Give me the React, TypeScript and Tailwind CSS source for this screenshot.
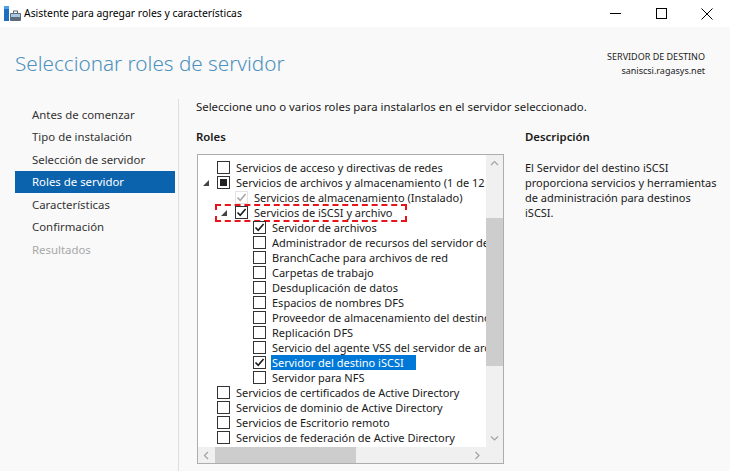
type Row = {
  label: string;
  level: 0 | 1 | 2;
  state: "off" | "on" | "mixed" | "fixed";
  expanded?: boolean;
  selected?: boolean;
  marked?: boolean;
};

const navItems = [
  { label: "Antes de comenzar" },
  { label: "Tipo de instalación" },
  { label: "Selección de servidor" },
  { label: "Roles de servidor", active: true },
  { label: "Características" },
  { label: "Confirmación" },
  { label: "Resultados", disabled: true },
];

const rows: Row[] = [
  { label: "Servicios de acceso y directivas de redes", level: 0, state: "off" },
  { label: "Servicios de archivos y almacenamiento (1 de 12 instalados)", level: 0, state: "mixed", expanded: true },
  { label: "Servicios de almacenamiento (Instalado)", level: 1, state: "fixed" },
  { label: "Servicios de iSCSI y archivo", level: 1, state: "on", expanded: true, marked: true },
  { label: "Servidor de archivos", level: 2, state: "on" },
  { label: "Administrador de recursos del servidor de archivos", level: 2, state: "off" },
  { label: "BranchCache para archivos de red", level: 2, state: "off" },
  { label: "Carpetas de trabajo", level: 2, state: "off" },
  { label: "Desduplicación de datos", level: 2, state: "off" },
  { label: "Espacios de nombres DFS", level: 2, state: "off" },
  { label: "Proveedor de almacenamiento del destino iSCSI (proveedores de hardware VDS y VSS)", level: 2, state: "off" },
  { label: "Replicación DFS", level: 2, state: "off" },
  { label: "Servicio del agente VSS del servidor de archivos", level: 2, state: "off" },
  { label: "Servidor del destino iSCSI", level: 2, state: "on", selected: true },
  { label: "Servidor para NFS", level: 2, state: "off" },
  { label: "Servicios de certificados de Active Directory", level: 0, state: "off" },
  { label: "Servicios de dominio de Active Directory", level: 0, state: "off" },
  { label: "Servicios de Escritorio remoto", level: 0, state: "off" },
  { label: "Servicios de federación de Active Directory", level: 0, state: "off" },
];

const indent = ["pl-[1px]", "pl-[19px]", "pl-[37px]"];

const Check = ({ state }: { state: Row["state"] }) => (
  <span
    className={`w-[13px] h-[13px] shrink-0 border flex items-center justify-center bg-white ${
      state === "fixed" ? "border-[#e3e3e3]" : "border-[#333333]"
    }`}
  >
    {state === "mixed" && <span className="w-[7px] h-[7px] bg-[#222]" />}
    {(state === "on" || state === "fixed") && (
      <svg width="11" height="11" viewBox="0 0 11 11">
        <path
          d="M1.5 5.5 L4.2 8.3 L9.6 2"
          fill="none"
          stroke={state === "fixed" ? "#a6a6a6" : "#1a1a1a"}
          strokeWidth="1.6"
        />
      </svg>
    )}
  </span>
);

const Chevron = ({ dir }: { dir: "up" | "down" | "left" | "right" }) => {
  const d = {
    up: "M1 5 L4.5 1.5 L8 5",
    down: "M1 1.5 L4.5 5 L8 1.5",
    left: "M5 1 L1.5 4.5 L5 8",
    right: "M1.5 1 L5 4.5 L1.5 8",
  }[dir];
  const vertical = dir === "up" || dir === "down";
  return (
    <svg width={vertical ? 9 : 7} height={vertical ? 7 : 9} viewBox={vertical ? "0 0 9 7" : "0 0 7 9"}>
      <path d={d} fill="none" stroke="#a3a3a3" strokeWidth="1.2" />
    </svg>
  );
};

const App = () => {
  return (
    <div className="w-[730px] h-[471px] overflow-hidden bg-[#f9f9f9] flex flex-col text-[11.4px] text-[#1a1a1a] font-['Noto_Sans','Open_Sans',sans-serif]">
      {/* title bar */}
      <div className="h-[27px] bg-white flex items-center shrink-0">
        <svg width="18" height="16" viewBox="0 0 18 16" className="ml-[4px]">
          <rect x="0" y="0" width="5" height="15" fill="#1f6fc1" />
          <rect x="0" y="0" width="5" height="3" fill="#4aa3e8" />
          <rect x="6" y="7" width="11" height="8" rx="1" fill="#5d6b7a" />
          <rect x="7" y="8" width="9" height="3" fill="#a9c7e3" />
          <rect x="9.5" y="5" width="4" height="2.5" fill="none" stroke="#5d6b7a" strokeWidth="1" />
        </svg>
        <span className="ml-[2px] text-[10.4px] text-black leading-none">Asistente para agregar roles y características</span>
        <div className="ml-auto flex items-center h-full">
          <div className="w-[46px] h-full flex items-center justify-center">
            <span className="w-[11px] h-px bg-black" />
          </div>
          <div className="w-[46px] h-full flex items-center justify-center">
            <span className="w-[11px] h-[11px] border border-black" />
          </div>
          <div className="w-[46px] h-full flex items-center justify-center">
            <svg width="12" height="12" viewBox="0 0 12 12">
              <path d="M0.5 0.5 L11.5 11.5 M11.5 0.5 L0.5 11.5" stroke="#000" strokeWidth="1" />
            </svg>
          </div>
        </div>
      </div>

      {/* header */}
      <div className="h-[72px] shrink-0 flex justify-between items-start pl-[15px] pr-[25px]">
        <h1 className="pt-[22px] text-[20.7px] leading-[28px] font-light text-[#4d92bd]">
          Seleccionar roles de servidor
        </h1>
        <div className="pt-[23px] text-[9px] leading-[14px] text-right text-[#222]">
          <div>SERVIDOR DE DESTINO</div>
          <div>saniscsi.ragasys.net</div>
        </div>
      </div>

      <div className="flex-1 flex min-h-0">
        {/* nav */}
        <nav className="w-[178px] shrink-0 pt-[4px] pl-[15px]">
          {navItems.map((item) => (
            <div
              key={item.label}
              className={`w-[160px] h-[22.5px] pl-[17px] flex items-center ${
                item.active
                  ? "bg-[#0b63ae] text-white"
                  : item.disabled
                  ? "text-[#a8a8a8]"
                  : "text-[#333]"
              }`}
            >
              {item.label}
            </div>
          ))}
        </nav>

        {/* main */}
        <div className="flex-1 border-l border-[#dedede] pl-[17px] flex flex-col">
          <p className="leading-[16px]">
            Seleccione uno o varios roles para instalarlos en el servidor seleccionado.
          </p>
          <div className="flex gap-[21px] mt-[14px]">
            <div className="w-[308px] shrink-0">
              <h2 className="font-semibold leading-[16px]">Roles</h2>
              <div className="mt-[9px] ml-[1px] w-[307px] h-[310px] border border-[#adadad] bg-white flex flex-col text-[11px]">
                <div className="flex-1 flex min-h-0">
                  <div className="flex-1 overflow-hidden pt-[5px]">
                    {rows.map((row) => (
                      <div
                        key={row.label}
                        className={`relative h-[15px] flex items-center whitespace-nowrap ${indent[row.level]}`}
                      >
                        <span className="w-[18px] h-[15px] shrink-0 flex items-center">
                          {row.expanded && (
                            <svg width="6" height="6" viewBox="0 0 6 6" className="ml-[4px] mt-[1px]">
                              <polygon points="6,0 6,6 0,6" fill="#444" />
                            </svg>
                          )}
                        </span>
                        <Check state={row.state} />
                        <span
                          className={`ml-[5px] leading-[15px] ${
                            row.selected ? "bg-[#0078d7] text-white pl-[1px] pr-[12px]" : "px-[1px]"
                          }`}
                        >
                          {row.label}
                        </span>
                        {row.marked && (
                          <span className="absolute left-[17px] top-[-1px] w-[192px] h-[18px] border-2 border-dashed border-[#e8141c]" />
                        )}
                      </div>
                    ))}
                  </div>
                  <div className="w-[17px] shrink-0 bg-[#f0f0f0] flex flex-col">
                    <div className="h-[17px] flex items-center justify-center">
                      <Chevron dir="up" />
                    </div>
                    <div className="flex-1 flex flex-col">
                      <div className="mt-[46px] h-[148px] bg-[#cdcdcd]" />
                    </div>
                    <div className="h-[17px] flex items-center justify-center">
                      <Chevron dir="down" />
                    </div>
                  </div>
                </div>
                <div className="h-[16px] shrink-0 flex bg-[#f0f0f0]">
                  <div className="w-[17px] flex items-center justify-center">
                    <Chevron dir="left" />
                  </div>
                  <div className="flex-1 flex">
                    <div className="w-[141px] h-full bg-[#cdcdcd]" />
                  </div>
                  <div className="w-[17px] flex items-center justify-center">
                    <Chevron dir="right" />
                  </div>
                  <div className="w-[17px]" />
                </div>
              </div>
            </div>
            <div className="flex-1 whitespace-nowrap">
              <h2 className="font-semibold leading-[16px]">Descripción</h2>
              <p className="mt-[15px] leading-[15px] text-[11px]">
                <span className="block">El Servidor del destino iSCSI</span>
                <span className="block">proporciona servicios y herramientas</span>
                <span className="block">de administración para destinos</span>
                <span className="block">iSCSI.</span>
              </p>
            </div>
          </div>
        </div>
      </div>
    </div>
  );
};

export default App;
